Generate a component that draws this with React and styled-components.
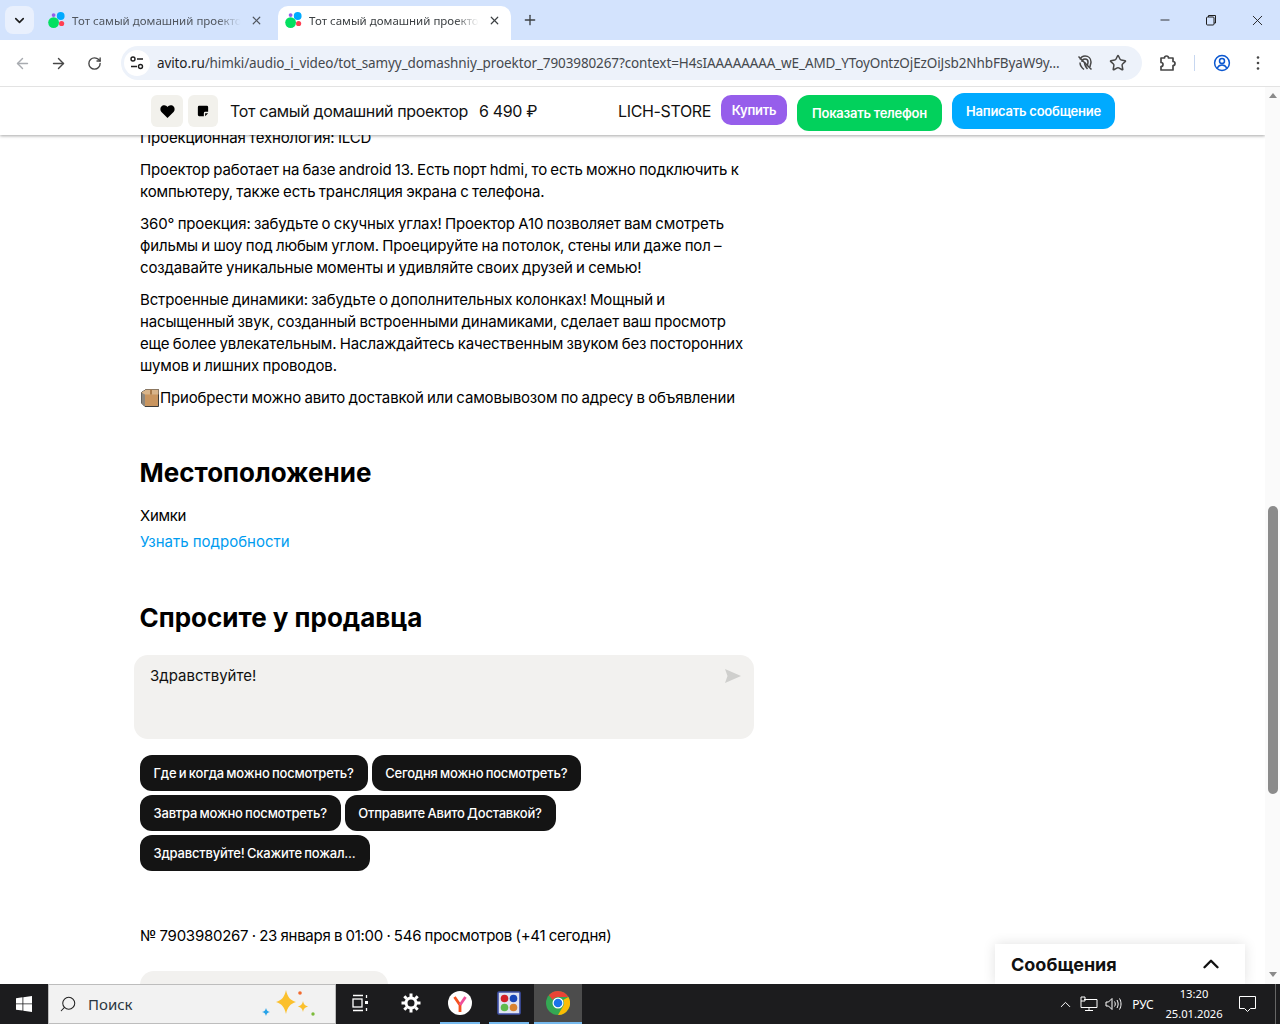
import styled, { createGlobalStyle } from "styled-components";
import { ArrowLeft, ArrowRight, ChevronDown, ChevronUp, Minus, Plus, RotateCw, Star, X, Search } from "lucide-react";

const Global = createGlobalStyle`
    html, body {
        margin: 0;
        padding: 0;
        background: #fff;
    }
    * {
        box-sizing: border-box;
    }
`

const Screen = styled.div`
    width: 1280px;
    height: 1024px;
    display: flex;
    flex-direction: column;
    overflow: hidden;
    font-family: "Inter", "Noto Sans", sans-serif;
    color: #111;
`

/* chrome */
const TabStrip = styled.div`
    height: 40px;
    flex: none;
    background: #d3e3fd;
    display: flex;
    align-items: flex-end;
    padding-left: 5px;
    font-family: "Noto Sans", sans-serif;
`

const TabMenu = styled.div`
    width: 29px;
    height: 28px;
    margin-bottom: 6px;
    border-radius: 8px;
    background: #e9f0fd;
    display: flex;
    align-items: center;
    justify-content: center;
    color: #1f1f1f;
`

const Tab = styled.div`
    width: ${p => p.$active ? "233px" : "235px"};
    height: 34px;
    margin-left: ${p => p.$active ? "0" : "9px"};
    padding: 0 ${p => p.$active ? "10px" : "15px"} 6px ${p => p.$active ? "7px" : "5px"};
    display: flex;
    align-items: center;
    gap: 6px;
    border-radius: 10px 10px 0 0;
    background: ${p => p.$active ? "#fff" : "transparent"};
    color: ${p => p.$active ? "#3c4043" : "#50565e"};
    font-size: 11.5px;
`

const TabTitle = styled.span`
    flex: 1;
    overflow: hidden;
    white-space: nowrap;
    -webkit-mask-image: linear-gradient(90deg, #000 84%, transparent 98%);
    mask-image: linear-gradient(90deg, #000 84%, transparent 98%);
`

const NewTab = styled.div`
    width: 40px;
    height: 34px;
    padding: 0 2px 6px 0;
    display: flex;
    align-items: center;
    justify-content: center;
    color: #3c4043;
`

const WindowControls = styled.div`
    margin-left: auto;
    height: 40px;
    display: flex;
    align-items: center;
    color: #1f1f1f;
`

const WindowButton = styled.div`
    width: 46px;
    height: 40px;
    display: flex;
    align-items: center;
    justify-content: center;
`

const Toolbar = styled.div`
    height: 47px;
    flex: none;
    background: #fff;
    border-bottom: 1px solid #e3e3e3;
    border-radius: 8px 8px 0 0;
    display: flex;
    align-items: center;
    padding-left: 4px;
    color: #474747;
`

const NavButton = styled.div`
    width: 36px;
    height: 36px;
    display: flex;
    align-items: center;
    justify-content: center;
    color: ${p => p.$muted ? "#a8abb0" : "#474747"};
`

const KebabButton = styled(NavButton)`
    margin-left: 9px;
`

const Omnibox = styled.div`
    width: 1021px;
    height: 34px;
    margin-left: 9px;
    border-radius: 17px;
    background: #edf2fa;
    display: flex;
    align-items: center;
    padding: 0 15px 0 3px;
    gap: 7px;
`

const SiteChip = styled.div`
    width: 26px;
    height: 26px;
    flex: none;
    border-radius: 50%;
    background: #fff;
    display: flex;
    align-items: center;
    justify-content: center;
`

const Url = styled.div`
    width: 905px;
    flex: none;
    font-family: "Noto Sans", sans-serif;
    font-size: 13.5px;
    letter-spacing: -0.11px;
    color: #45494e;
    white-space: nowrap;
    overflow: hidden;
    b {
        font-weight: 400;
        color: #1f1f1f;
    }
`

const OmniIcons = styled.div`
    margin-left: auto;
    display: flex;
    align-items: center;
    gap: 15px;
    color: #474747;
`

const ToolbarIcons = styled.div`
    display: flex;
    align-items: center;
    margin-left: 16px;
`

const Separator = styled.div`
    width: 1px;
    height: 16px;
    background: #c7d7f0;
    margin: 0 18px 0 16px;
`

/* page */
const Viewport = styled.div`
    flex: 1;
    min-height: 0;
    position: relative;
    overflow: hidden;
    display: flex;
`

const Content = styled.main`
    flex: 1;
    min-width: 0;
    padding: 40px 0 0 140px;
`

const Column = styled.div`
    width: 615px;
`

const Paragraph = styled.p`
    margin: 0 0 10px;
    font-size: 15px;
    line-height: 22px;
    letter-spacing: -0.15px;
    word-spacing: -0.7px;
    white-space: pre;
    color: #000;
`

const BoxEmoji = styled.svg`
    width: 20px;
    height: 20px;
    vertical-align: -5px;
`

const Heading = styled.h2`
    margin: ${p => p.$top} 0 0 -0.5px;
    font-size: 26px;
    line-height: 36px;
    font-weight: 700;
    color: #000;
`

const Place = styled.div`
    margin-top: 14px;
    font-size: 15px;
    line-height: 22px;
    letter-spacing: -0.3px;
    color: #000;
`

const MoreLink = styled.a`
    display: block;
    margin-top: 4px;
    font-size: 15px;
    line-height: 22px;
    color: #009cf0;
`

const Question = styled.div`
    width: 620px;
    height: 84px;
    margin: 19px 0 0 -6px;
    padding: 10px 12px 0 16px;
    border-radius: 14px;
    background: #f2f1ef;
    display: flex;
    justify-content: space-between;
    font-size: 15px;
    line-height: 22px;
`

const SendGlyph = styled.svg`
    width: 18px;
    height: 16px;
    margin-top: 3px;
`

const Chips = styled.div`
    margin-top: 16px;
    display: flex;
    flex-wrap: wrap;
    gap: 4px;
    width: 480px;
`

const Chip = styled.div`
    height: 36px;
    padding: 0 14px 1px 13.5px;
    border-radius: 12px;
    background: #141414;
    color: #fff;
    font-size: 13px;
    font-weight: 500;
    letter-spacing: -0.2px;
    word-spacing: -0.9px;
    display: flex;
    align-items: center;
    white-space: nowrap;
`

const Meta = styled.div`
    margin-top: 54px;
    font-size: 15px;
    line-height: 22px;
    letter-spacing: -0.25px;
    word-spacing: -0.6px;
    color: #000;
`

const SellerCard = styled.div`
    width: 248px;
    height: 60px;
    margin-top: 24px;
    border-radius: 14px;
    background: #f2f1ef;
`

const Scrollbar = styled.div`
    width: 15px;
    flex: none;
    background: #fafafa;
    display: flex;
    flex-direction: column;
    align-items: center;
    position: relative;
    z-index: 3;
`

const ScrollArrow = styled.div`
    width: 0;
    height: 0;
    margin-top: ${p => p.$up ? "6px" : "auto"};
    margin-bottom: ${p => p.$up ? "0" : "7px"};
    border-left: 4.5px solid transparent;
    border-right: 4.5px solid transparent;
    ${p => p.$up ? "border-bottom: 5px solid #8a8a8a;" : "border-top: 5px solid #8a8a8a;"}
`

const ScrollThumb = styled.div`
    width: 10px;
    height: 288px;
    margin-top: 408px;
    background: #8b8b8b;
    border-radius: 5px;
`

/* things lying over the page */
const StickyBar = styled.div`
    position: absolute;
    top: 0;
    left: 0;
    right: 15px;
    height: 48px;
    background: #fff;
    box-shadow: 0 1px 3px rgba(0, 0, 0, 0.35);
    z-index: 2;
    display: flex;
    align-items: center;
    padding-left: 151px;
    letter-spacing: -0.35px;
`

const SquareButton = styled.div`
    width: ${p => p.$w};
    height: 32px;
    margin-right: 5px;
    border-radius: 6px;
    background: #f2f1ec;
    display: flex;
    align-items: center;
    justify-content: center;
`

const BarTitle = styled.div`
    margin-left: 7px;
    width: 249px;
    font-size: 16px;
    white-space: nowrap;
`

const BarPrice = styled.div`
    width: 139px;
    font-size: 16px;
    white-space: nowrap;
`

const BarSeller = styled.div`
    width: 103px;
    font-size: 16px;
    white-space: nowrap;
`

const ActionButton = styled.div`
    width: ${p => p.$w};
    height: ${p => p.$h};
    margin: ${p => p.$margin};
    border-radius: ${p => p.$radius};
    background: ${p => p.$bg};
    color: #fff;
    font-size: 13px;
    font-weight: 600;
    letter-spacing: -0.25px;
    display: flex;
    align-items: center;
    justify-content: center;
    padding-bottom: 1px;
    white-space: nowrap;
`

const MessagesPanel = styled.div`
    position: absolute;
    right: 35px;
    bottom: 0;
    width: 250px;
    height: 40px;
    padding: 0 21px 0 16px;
    background: #fff;
    box-shadow: 0 0 12px rgba(0, 0, 0, 0.12);
    display: flex;
    align-items: center;
    justify-content: space-between;
    font-size: 18px;
    font-weight: 700;
    z-index: 2;
`

/* taskbar */
const Taskbar = styled.div`
    height: 40px;
    flex: none;
    background: #1c1c1e;
    display: flex;
    align-items: center;
    color: #fff;
    font-family: "Noto Sans", sans-serif;
`

const StartButton = styled.div`
    width: 48px;
    height: 40px;
    display: flex;
    align-items: center;
    justify-content: center;
`

const SearchBox = styled.div`
    width: 288px;
    height: 40px;
    padding: 0 12px 0 10px;
    border: 1px solid #bdbdbd;
    background: #f2f2f2;
    color: #222;
    display: flex;
    align-items: center;
    gap: 11px;
    font-size: 15px;
`

const SearchLabel = styled.span`
    flex: 1;
    color: #2b3640;
`

const MirroredSearch = styled(Search)`
    transform: scaleX(-1);
`

const TaskItem = styled.div`
    width: ${p => p.$w || "48px"};
    height: 40px;
    margin-left: ${p => p.$gap || "0"};
    display: flex;
    align-items: center;
    justify-content: center;
    background: ${p => p.$active ? "#4c4c4c" : "transparent"};
    border-bottom: 2px solid ${p => p.$open ? "#76b9ed" : "transparent"};
`

const Tray = styled.div`
    margin-left: auto;
    display: flex;
    align-items: center;
    height: 40px;
`

const TrayItem = styled.div`
    width: ${p => p.$w};
    margin-left: ${p => p.$gap || "0"};
    display: flex;
    align-items: center;
    justify-content: center;
    font-size: 12px;
`

const Clock = styled.div`
    width: 66px;
    text-align: center;
    font-size: 11.2px;
    line-height: 20px;
`

const ShowDesktop = styled.div`
    width: 5px;
    height: 40px;
    margin-left: 14px;
    border-left: 1px solid #666;
`

const AvitoLogo = () => (
    <svg width="18" height="18" viewBox="0 0 18 18">
        <circle cx="5.6" cy="11.6" r="5.4" fill="#04e061" />
        <circle cx="12.7" cy="5" r="3.9" fill="#0af" />
        <circle cx="13.6" cy="12.5" r="2.6" fill="#ff4053" />
        <circle cx="5.6" cy="4.1" r="1.9" fill="#965eeb" />
    </svg>
)

const TuneIcon = () => (
    <svg width="16" height="16" viewBox="0 0 16 16" fill="none" stroke="#1f1f1f" strokeWidth="1.4">
        <circle cx="4" cy="4" r="2" />
        <path d="M8 4h6M2 11.5h6" />
        <circle cx="11.5" cy="11.5" r="2" />
    </svg>
)

const RestoreIcon = () => (
    <svg width="12" height="12" viewBox="0 0 12 12" fill="none" stroke="#1f1f1f" strokeWidth="1">
        <rect x="1.5" y="3" width="7.5" height="8" rx="1" />
        <path d="M3.5 3V1.5h7v7.5H9" />
    </svg>
)

const NoTrackIcon = () => (
    <svg width="18" height="18" viewBox="0 0 18 18" fill="none" stroke="#474747" strokeWidth="1.5">
        <path d="M4 5.5C5 3 7 2 9 2c3.5 0 6 2.5 6 6 0 2-1 3-1 5" />
        <path d="M6 8c0-2 1.3-3 3-3s3 1.3 3 3c0 1.5-.5 2.5-.8 4" />
        <path d="M4 8.5c0 3 1.5 5 4 7M8.5 8c0 2.5 1 5 3 7" />
        <path d="M2.5 2.500l13 13" />
    </svg>
)

const ExtensionIcon = () => (
    <svg width="20" height="20" viewBox="0 0 20 20" fill="none" stroke="#474747" strokeWidth="1.7" strokeLinejoin="round">
        <path d="M3 5h3.500a2 2 0 0 1 4 0H15v3.500a2 2 0 0 1 0 4V17H3v-3.500a2 2 0 0 0 0-4z" />
    </svg>
)

const ProfileIcon = () => (
    <svg width="18" height="18" viewBox="0 0 18 18" fill="none" stroke="#0b57d0" strokeWidth="1.5">
        <circle cx="9" cy="9" r="7.4" />
        <circle cx="9" cy="7" r="2.5" />
        <path d="M4.300 14c1-2 2.700-3 4.700-3s3.700 1 4.700 3" />
    </svg>
)

const KebabIcon = () => (
    <svg width="16" height="16" viewBox="0 0 16 16" fill="#474747">
        <circle cx="8" cy="2.5" r="1.3" />
        <circle cx="8" cy="8" r="1.3" />
        <circle cx="8" cy="13.5" r="1.3" />
    </svg>
)

const HeartIcon = () => (
    <svg width="15" height="13" viewBox="0 0 16 14" fill="#000">
        <path d="M8 14 1.500 7.500C-.5 5.300.2 1.800 2.700.6 4.800-.4 6.900.3 8 2.200 9.100.3 11.200-.4 13.300.6c2.500 1.200 3.200 4.700 1.200 6.900z" />
    </svg>
)

const NoteIcon = () => (
    <svg width="12" height="12" viewBox="0 0 14 14" fill="#000">
        <path d="M2.500 1h9A1.500 1.500 0 0 1 13 2.500V8H9.500A1.500 1.500 0 0 0 8 9.500V13H2.500A1.500 1.500 0 0 1 1 11.500v-9A1.500 1.500 0 0 1 2.500 1z" />
        <path d="M9.500 13V9.500H13z" />
    </svg>
)

const SendIcon = () => (
    <SendGlyph viewBox="0 0 18 16" fill="#cfcfcd">
        <path d="M1 1 17 8 1 15l2.500-7z" />
    </SendGlyph>
)

const WindowsLogo = () => (
    <svg width="16" height="16" viewBox="0 0 16 16" fill="#fff">
        <path d="M0 2.200 6.500 1.300v6.200H0zM7.300 1.200 16 0v7.500H7.300zM0 8.300h6.500v6.300L0 13.700zM7.300 8.300H16V16l-8.700-1.200z" />
    </svg>
)

const Sparkles = () => (
    <svg width="66" height="32" viewBox="0 0 66 32">
        <path d="M29 2c1.500 7 4 10 10 12-6 2-8.500 5-10 12-1.500-7-4-10-10-12 6-2 8.500-5 10-12z" fill="#fbc02d" />
        <path d="M46 13c.8 3.500 2 4.500 5 5.500-3 1-4.200 2-5 5.500-.8-3.500-2-4.500-5-5.500 3-1 4.200-2 5-5.500z" fill="#fbc02d" />
        <path d="M9 20c.6 2.500 1.500 3.500 4 4-2.500.6-3.400 1.500-4 4-.6-2.500-1.500-3.400-4-4 2.500-.5 3.400-1.500 4-4z" fill="#29a3e8" />
        <circle cx="43" cy="5" r="1.800" fill="#f26a2e" />
        <circle cx="56" cy="26" r="1.700" fill="#7cbb3a" />
    </svg>
)

const TaskViewIcon = () => (
    <svg width="16" height="18" viewBox="0 0 16 18" fill="none" stroke="#fff" strokeWidth="1.3">
        <path d="M1 1.500h10M1 16.500h10" />
        <rect x="1" y="5" width="9" height="8" />
        <path d="M14.500 1v3M14.500 14v3" />
        <rect x="13" y="7" width="3" height="3" fill="#fff" stroke="none" />
    </svg>
)

const GearIcon = () => (
    <svg width="20" height="20" viewBox="0 0 20 20" fill="none" stroke="#fff">
        <circle cx="10" cy="10" r="5" strokeWidth="3" />
        <path d="M10 0.500v3.500M10 16v3.500M0.500 10H4M16 10h3.500M3.300 3.300l2.400 2.400M14.300 14.300l2.400 2.400M3.300 16.700l2.400-2.400M14.300 5.700l2.400-2.400" strokeWidth="3" />
    </svg>
)

const YandexLogo = () => (
    <svg width="24" height="24" viewBox="0 0 24 24" fill="none">
        <circle cx="12" cy="12" r="12" fill="#fff" />
        <path d="M6.500 6 12 14v7" stroke="#f4511e" strokeWidth="2.800" />
        <path d="M17.500 6 12 14" stroke="#f0509a" strokeWidth="2.800" />
    </svg>
)

const PaletteApp = () => (
    <svg width="24" height="24" viewBox="0 0 24 24">
        <rect x="1" y="1" width="22" height="22" rx="1" fill="#dfe3f2" stroke="#3f51a8" strokeWidth="1.6" />
        <circle cx="7.5" cy="7.5" r="3.800" fill="#d32027" />
        <circle cx="16.500" cy="7.500" r="3.800" fill="#1846b8" />
        <circle cx="7.500" cy="16.500" r="3.800" fill="#5fbb4b" />
        <circle cx="16.500" cy="16.500" r="3.800" fill="#d9832f" />
    </svg>
)

const ChromeLogo = () => (
    <svg width="24" height="24" viewBox="0 0 24 24">
        <circle cx="12" cy="12" r="12" fill="#34a853" />
        <path d="M12 0a12 12 0 0 1 10.400 6H12a6 6 0 0 0-5.200 3L2.800 4.300A12 12 0 0 1 12 0z" fill="#ea4335" />
        <path d="M22.400 6A12 12 0 0 1 12 24l5.200-9a6 6 0 0 0 0-6z" fill="#fbbc04" />
        <circle cx="12" cy="12" r="5.500" fill="#fff" />
        <circle cx="12" cy="12" r="4.300" fill="#1a73e8" />
    </svg>
)

const NetworkIcon = () => (
    <svg width="18" height="16" viewBox="0 0 18 16" fill="none" stroke="#fff">
        <path d="M4 3.500h13v8H1V1h4v4H1M9 11.500V14M5 14.500h8" />
    </svg>
)

const SpeakerIcon = () => (
    <svg width="17" height="14" viewBox="0 0 17 14" fill="none" stroke="#fff">
        <path d="M1 5h2.500L7 1.500v11L3.500 9H1zM9.500 4.500c1 1.500 1 3.500 0 5M12 3c1.500 2.500 1.500 5.500 0 8M14.500 1.500c2 3.500 2 7.500 0 11" />
    </svg>
)

const NotifyIcon = () => (
    <svg width="17" height="16" viewBox="0 0 17 16" fill="none" stroke="#fff">
        <path d="M.5.500h16v12h-5l-3 3-3-3h-5z" />
    </svg>
)

const Cube = () => (
    <BoxEmoji viewBox="0 0 20 20">
        <path d="M1.500 4.500 6 1.500h12.500V18.500H5L1.500 15z" fill="#c9955f" stroke="#3c3c3c" />
        <path d="M1.500 4.500 5 6.500V18.500L1.500 15z" fill="#8d8880" />
        <path d="M1.500 4.500 6 1.500h12.500V6.500H5z" fill="#d8b48a" />
        <path d="M11 1.500v5" stroke="#a87a4a" strokeWidth="2" />
    </BoxEmoji>
)

const App = () => {
    return (
        <Screen>
            <Global />
            <TabStrip>
                <TabMenu><ChevronDown size={15} strokeWidth={2.6} /></TabMenu>
                <Tab>
                    <AvitoLogo />
                    <TabTitle>Тот самый домашний проектор</TabTitle>
                    <X size={13} strokeWidth={2.2} />
                </Tab>
                <Tab $active>
                    <AvitoLogo />
                    <TabTitle>Тот самый домашний проектор</TabTitle>
                    <X size={13} strokeWidth={2.2} />
                </Tab>
                <NewTab><Plus size={16} strokeWidth={2} /></NewTab>
                <WindowControls>
                    <WindowButton><Minus size={14} strokeWidth={1.5} /></WindowButton>
                    <WindowButton><RestoreIcon /></WindowButton>
                    <WindowButton><X size={17} strokeWidth={1.3} /></WindowButton>
                </WindowControls>
            </TabStrip>
            <Toolbar>
                <NavButton $muted><ArrowLeft size={17} /></NavButton>
                <NavButton><ArrowRight size={17} /></NavButton>
                <NavButton><RotateCw size={15} strokeWidth={2.2} /></NavButton>
                <Omnibox>
                    <SiteChip><TuneIcon /></SiteChip>
                    <Url><b>avito.ru</b>/himki/audio_i_video/tot_samyy_domashniy_proektor_7903980267?context=H4sIAAAAAAAA_wE_AMD_YToyOntzOjEzOiJsb2NhbFByaW9y...</Url>
                    <OmniIcons>
                        <NoTrackIcon />
                        <Star size={18} strokeWidth={2} />
                    </OmniIcons>
                </Omnibox>
                <ToolbarIcons>
                    <ExtensionIcon />
                    <Separator />
                    <ProfileIcon />
                    <KebabButton><KebabIcon /></KebabButton>
                </ToolbarIcons>
            </Toolbar>
            <Viewport>
                <Content>
                    <Column>
                        <Paragraph>Проекционная технология: ILCD</Paragraph>
                        <Paragraph>{"Проектор работает на базе android 13. Есть порт hdmi, то есть можно подключить к\nкомпьютеру, также есть трансляция экрана с телефона."}</Paragraph>
                        <Paragraph>{"360° проекция: забудьте о скучных углах! Проектор A10 позволяет вам смотреть\nфильмы и шоу под любым углом. Проецируйте на потолок, стены или даже пол –\nсоздавайте уникальные моменты и удивляйте своих друзей и семью!"}</Paragraph>
                        <Paragraph>{"Встроенные динамики: забудьте о дополнительных колонках! Мощный и\nнасыщенный звук, созданный встроенными динамиками, сделает ваш просмотр\nеще более увлекательным. Наслаждайтесь качественным звуком без посторонних\nшумов и лишних проводов."}</Paragraph>
                        <Paragraph><Cube />Приобрести можно авито доставкой или самовывозом по адресу в объявлении</Paragraph>
                        <Heading $top="46px">Местоположение</Heading>
                        <Place>Химки</Place>
                        <MoreLink>Узнать подробности</MoreLink>
                        <Heading $top="47px">Спросите у продавца</Heading>
                        <Question>
                            Здравствуйте!
                            <SendIcon />
                        </Question>
                        <Chips>
                            <Chip>Где и когда можно посмотреть?</Chip>
                            <Chip>Сегодня можно посмотреть?</Chip>
                            <Chip>Завтра можно посмотреть?</Chip>
                            <Chip>Отправите Авито Доставкой?</Chip>
                            <Chip>Здравствуйте! Скажите пожал...</Chip>
                        </Chips>
                        <Meta>№ 7903980267 · 23 января в 01:00 · 546 просмотров (+41 сегодня)</Meta>
                        <SellerCard />
                    </Column>
                </Content>
                <Scrollbar>
                    <ScrollArrow $up />
                    <ScrollThumb />
                    <ScrollArrow />
                </Scrollbar>
                <StickyBar>
                    <SquareButton $w="32px"><HeartIcon /></SquareButton>
                    <SquareButton $w="30px"><NoteIcon /></SquareButton>
                    <BarTitle>Тот самый домашний проектор</BarTitle>
                    <BarPrice>6 490 ₽</BarPrice>
                    <BarSeller>LICH-STORE</BarSeller>
                    <ActionButton $w="66px" $h="30px" $radius="10px" $bg="#965eeb" $margin="-2px 10px 0 0">Купить</ActionButton>
                    <ActionButton $w="145px" $h="36px" $radius="12px" $bg="#02d15c" $margin="4px 10px 0 0">Показать телефон</ActionButton>
                    <ActionButton $w="163px" $h="36px" $radius="12px" $bg="#00aaff" $margin="0">Написать сообщение</ActionButton>
                </StickyBar>
                <MessagesPanel>
                    Сообщения
                    <ChevronUp size={26} strokeWidth={2.2} />
                </MessagesPanel>
            </Viewport>
            <Taskbar>
                <StartButton><WindowsLogo /></StartButton>
                <SearchBox>
                    <MirroredSearch size={18} strokeWidth={1.4} />
                    <SearchLabel>Поиск</SearchLabel>
                    <Sparkles />
                </SearchBox>
                <TaskItem><TaskViewIcon /></TaskItem>
                <TaskItem $gap="3px"><GearIcon /></TaskItem>
                <TaskItem $open $w="40px" $gap="5px"><YandexLogo /></TaskItem>
                <TaskItem $open $w="40px" $gap="9px"><PaletteApp /></TaskItem>
                <TaskItem $open $active $gap="5px"><ChromeLogo /></TaskItem>
                <Tray>
                    <TrayItem $w="24px"><ChevronUp size={17} strokeWidth={1.4} /></TrayItem>
                    <TrayItem $w="24px"><NetworkIcon /></TrayItem>
                    <TrayItem $w="24px"><SpeakerIcon /></TrayItem>
                    <TrayItem $w="36px">РУС</TrayItem>
                    <Clock>13:20<br />25.01.2026</Clock>
                    <TrayItem $w="28px" $gap="6px"><NotifyIcon /></TrayItem>
                    <ShowDesktop />
                </Tray>
            </Taskbar>
        </Screen>
    );
}

export default App;
